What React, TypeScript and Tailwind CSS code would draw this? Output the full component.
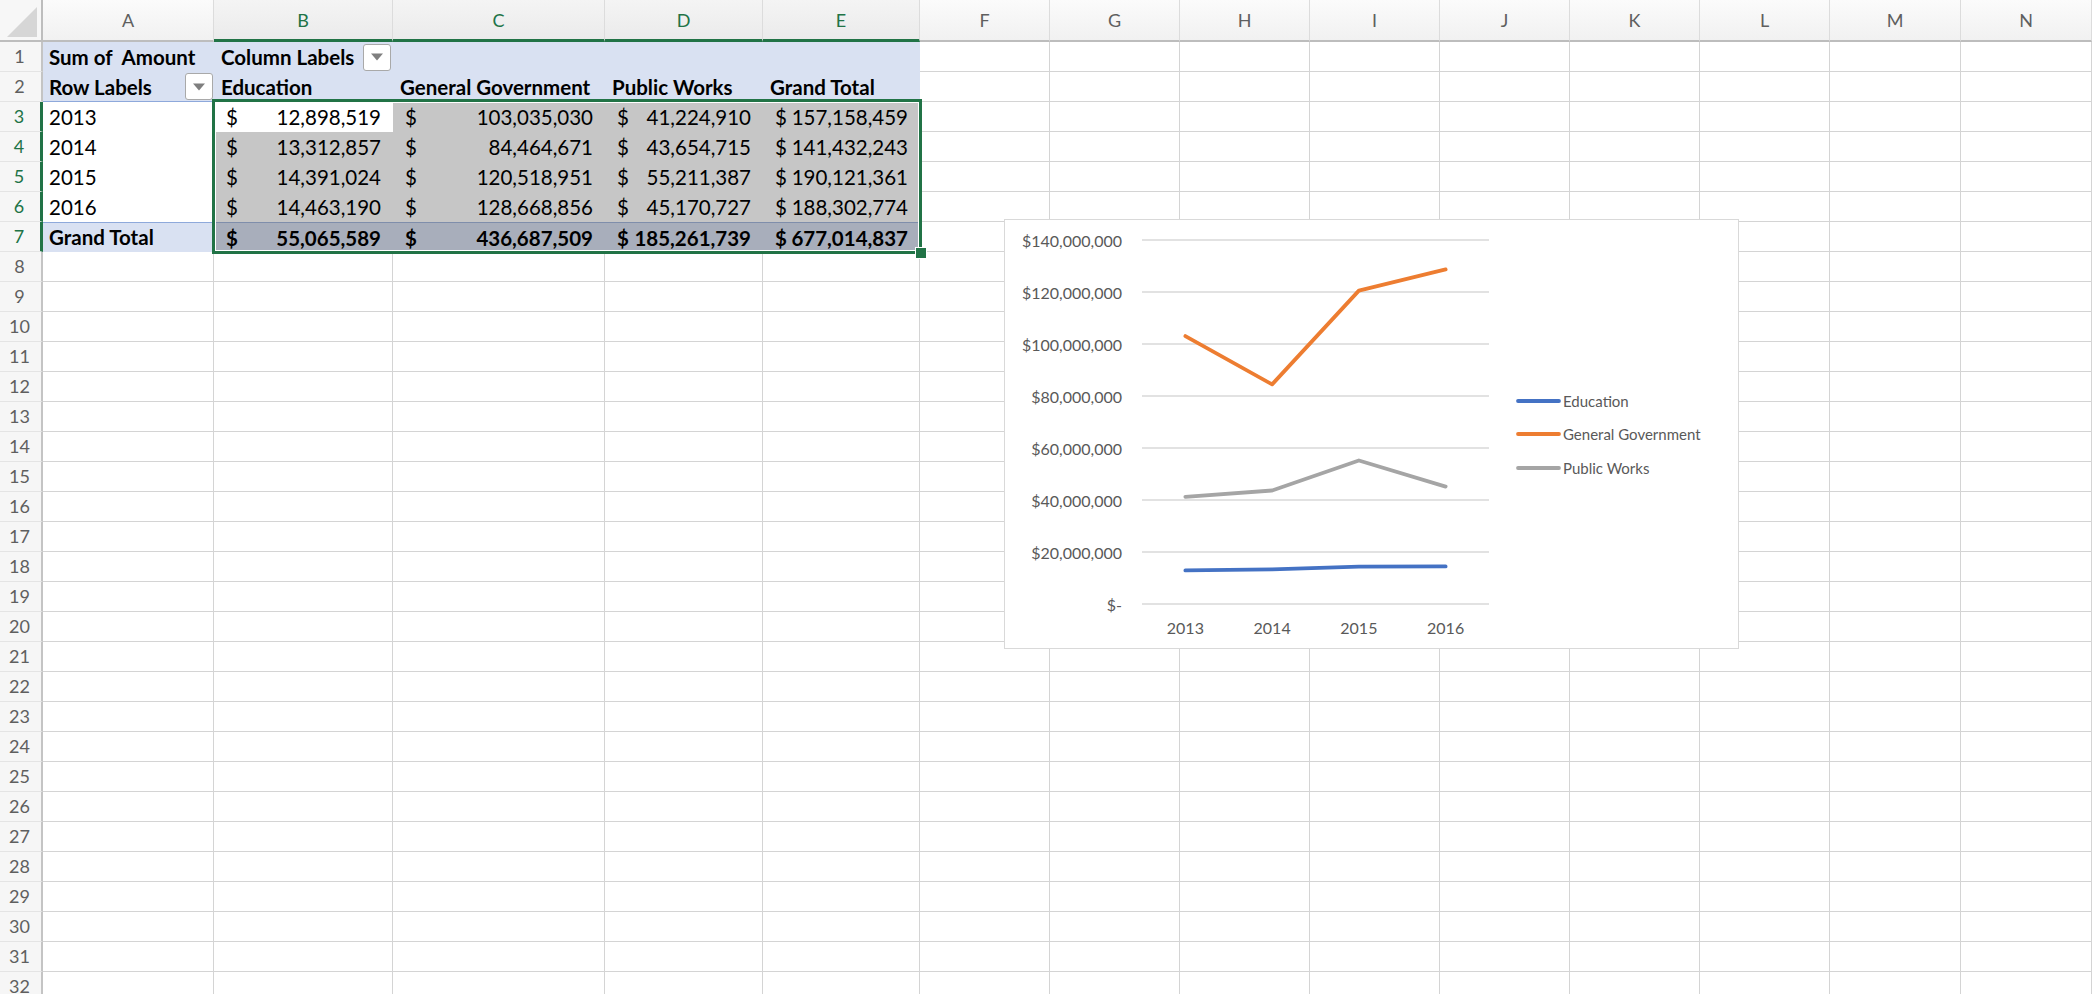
import React from 'react'

const COLS = ['A', 'B', 'C', 'D', 'E', 'F', 'G', 'H', 'I', 'J', 'K', 'L', 'M', 'N']
const ROWS = Array.from({ length: 32 }, (_, i) => i + 1)

const years = ['2013', '2014', '2015', '2016']
const education = [12898519, 13312857, 14391024, 14463190]
const general = [103035030, 84464671, 120518951, 128668856]
const works = [41224910, 43654715, 55211387, 45170727]
const rowTotals = [157158459, 141432243, 190121361, 188302774]
// grand totals as shown in the sheet (source data has cents)
const totalRow = [55065589, 436687509, 185261739, 677014837]

const fmt = (n: number) => n.toLocaleString('en-US')

const bodyRow = (i: number) => [education[i], general[i], works[i], rowTotals[i]]

function FilterButton() {
  return (
    <div className="flex h-[27px] w-[28px] shrink-0 items-center justify-center rounded-[3px] border border-[#a9a9a9] bg-white">
      <svg width="12" height="8" viewBox="0 0 12 8">
        <path d="M0 0.5h12L6 7.5z" fill="#7f7f7f" />
      </svg>
    </div>
  )
}

function Money({ value, bold, bg }: { value: number; bold?: boolean; bg: string }) {
  return (
    <div className={`flex h-[30px] items-center justify-between pl-[12px] pr-[12px] leading-[30px] ${bg} ${bold ? 'font-bold' : ''}`}>
      <span>$</span>
      <span>{fmt(value)}</span>
    </div>
  )
}

function Cell({ r, c }: { r: number; c: number }) {
  const inPivot = r <= 7 && c <= 4
  if (!inPivot) {
    return <div className="h-[30px] border-r border-b border-[#d4d4d4]" />
  }

  if (r === 1) {
    if (c === 0)
      return (
        <div className="h-[30px] whitespace-pre bg-[#d9e1f2] pl-[6px] leading-[30px] font-bold">Sum of  Amount</div>
      )
    if (c === 1)
      return (
        <div className="flex h-[30px] items-center justify-between bg-[#d9e1f2] pl-[7px] pr-[2px] leading-[30px] font-bold">
          <span>Column Labels</span>
          <FilterButton />
        </div>
      )
    return <div className="h-[30px] bg-[#d9e1f2]" />
  }

  if (r === 2) {
    if (c === 0)
      return (
        <div className="flex h-[30px] items-center justify-between border-b border-[#8ea9db] bg-[#d9e1f2] pl-[6px] pr-[1px] leading-[30px] font-bold">
          <span>Row Labels</span>
          <FilterButton />
        </div>
      )
    const heads = ['Education', 'General Government', 'Public Works', 'Grand Total']
    return (
      <div className="h-[30px] whitespace-nowrap bg-[#d9e1f2] pl-[7px] leading-[30px] font-bold">{heads[c - 1]}</div>
    )
  }

  if (r === 7) {
    if (c === 0)
      return (
        <div className="h-[30px] border-t border-[#8ea9db] bg-[#d9e1f2] pl-[6px] leading-[28px] font-bold">Grand Total</div>
      )
    return <Money value={totalRow[c - 1]} bold bg="bg-[#a8aebb] border-t border-[#7f8eab] leading-[28px]" />
  }

  const i = r - 3
  if (c === 0) return <div className="h-[30px] bg-white pl-[6px] leading-[30px]">{years[i]}</div>
  return <Money value={bodyRow(i)[c - 1]} bg={r === 3 && c === 1 ? 'bg-white' : 'bg-[#c6c6c6]'} />
}

function ColumnHeader({ label }: { label: string }) {
  const selected = ['B', 'C', 'D', 'E'].includes(label)
  return (
    <div
      className={`flex h-[42px] items-center justify-center border-r border-[#dcdcdc] bg-linear-to-b text-[18px] ${
        selected
          ? 'border-b-[3px] border-b-[#217346] from-[#f4f4f4] to-[#ebebeb] pt-[2px] text-[#217346]'
          : 'border-b-2 border-b-[#bdbdbd] from-[#fbfbfb] to-[#f1f1f1] text-[#5f5f5f]'
      }`}
    >
      {label}
    </div>
  )
}

function RowHeader({ n }: { n: number }) {
  const selected = n >= 3 && n <= 7
  return (
    <div
      className={`flex h-[30px] items-center justify-center border-b border-b-[#e4e4e4] bg-[#f6f6f6] pr-[2px] text-[18px] ${
        selected ? 'border-r-[3px] border-r-[#217346] text-[#217346]' : 'border-r-2 border-r-[#c4c4c4] text-[#5f5f5f]'
      }`}
    >
      {n}
    </div>
  )
}

function Chart() {
  const plotLeft = 137
  const plotRight = 484
  const baseY = 384
  const topY = 20
  const step = (plotRight - plotLeft) / 4
  const x = (i: number) => plotLeft + step * (i + 0.5)
  const y = (v: number) => baseY - (v / 140000000) * (baseY - topY)
  const ticks = [0, 20, 40, 60, 80, 100, 120, 140]
  const series = [
    { name: 'Education', color: '#4472c4', data: education },
    { name: 'General Government', color: '#ed7d31', data: general },
    { name: 'Public Works', color: '#a5a5a5', data: works },
  ]
  const legendY = [181, 214, 248]

  return (
    <div className="absolute left-[1004px] top-[219px] h-[430px] w-[735px] border border-[#d9d9d9] bg-white">
      <svg width="733" height="428" className="block" fontFamily="Lato, sans-serif" fontSize="16">
        {ticks.map((t) => {
          const gy = y(t * 1000000)
          return (
            <g key={t}>
              <line x1={plotLeft} x2={plotRight} y1={gy} y2={gy} stroke="#d9d9d9" strokeWidth="1.3" />
              <text x={117} y={gy} textAnchor="end" dominantBaseline="central" fill="#595959">
                {t === 0 ? '$-' : `$${fmt(t * 1000000)}`}
              </text>
            </g>
          )
        })}
        {years.map((yr, i) => (
          <text key={yr} x={x(i)} y={407} textAnchor="middle" dominantBaseline="central" fill="#595959">
            {yr}
          </text>
        ))}
        {series.map((s) => (
          <polyline
            key={s.name}
            points={s.data.map((v, i) => `${x(i)},${y(v)}`).join(' ')}
            fill="none"
            stroke={s.color}
            strokeWidth="3.8"
            strokeLinecap="round"
            strokeLinejoin="round"
          />
        ))}
        {series.map((s, i) => (
          <g key={s.name}>
            <line x1={513} x2={554} y1={legendY[i]} y2={legendY[i]} stroke={s.color} strokeWidth="3.8" strokeLinecap="round" />
            <text x={558} y={legendY[i]} dominantBaseline="central" fill="#595959" fontSize="15">
              {s.name}
            </text>
          </g>
        ))}
      </svg>
    </div>
  )
}

export default function App() {
  return (
    <div className="relative h-[994px] w-[2092px] overflow-hidden bg-white font-['Lato',sans-serif] text-[20.5px] text-black">
      <div className="grid grid-cols-[43px_171px_179px_212px_158px_157px_repeat(7,130px)_131px_131px]">
        <div className="relative h-[42px] border-r-2 border-b-2 border-[#bdbdbd] bg-[#f7f7f7]">
          <svg className="absolute left-[7px] top-[7px]" width="30" height="30" viewBox="0 0 30 30">
            <path d="M30 0V30H0z" fill="#d6d6d6" />
          </svg>
        </div>
        {COLS.map((c) => (
          <ColumnHeader key={c} label={c} />
        ))}
        {ROWS.map((r) => (
          <React.Fragment key={r}>
            <RowHeader n={r} />
            {COLS.map((c, ci) => (
              <Cell key={c} r={r} c={ci} />
            ))}
          </React.Fragment>
        ))}
      </div>

      {/* selection B3:E7 */}
      <div className="pointer-events-none absolute left-[212px] top-[99px] h-[155px] w-[710px] border-[3px] border-[#217346]">
        <div className="h-full w-full border border-white" />
      </div>
      <div className="absolute left-[915px] top-[247px] h-[12px] w-[12px] border border-white bg-[#217346]" />

      <Chart />
    </div>
  )
}
